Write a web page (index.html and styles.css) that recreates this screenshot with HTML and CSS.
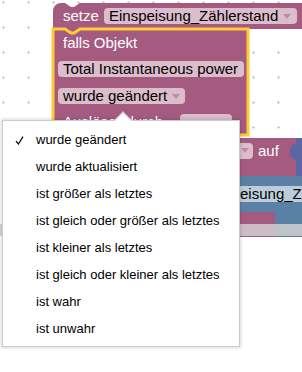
FILE: index.html
```html
<!DOCTYPE html>
<html lang="de">
<head>
  <meta charset="UTF-8">
  <meta name="viewport" content="width=device-width, initial-scale=1.0">
  <title>Blockly - Auslöser</title>
  <link rel="stylesheet" href="styles.css">
</head>
<body>
  <div class="workspace">
    <svg class="canvas" width="302" height="237" viewBox="0 0 302 237">
      <defs>
        <pattern id="grid" width="25" height="25" patternUnits="userSpaceOnUse">
          <path class="grid-mark" d="M2 2.5H5M3.5 1V4"/>
        </pattern>
      </defs>
      <rect width="302" height="237" fill="url(#grid)"/>

      <!-- setze Einspeisung_Zählerstand -->
      <path class="block-var" d="M53 11a8 8 0 0 1 8-8h4l6 4h3l6-4H306V29H80l-6 4h-3l-6-4H53Z"/>
      <text class="label" x="63" y="21">setze</text>
      <rect class="field-var" x="104" y="8" width="193" height="16" rx="4"/>
      <text class="field-text" x="109" y="21">Einspeisung_Zählerstand</text>
      <path class="arrow-var" d="M283 14h8l-4 5z"/>

      <!-- zweiter Block: ... auf -->
      <rect class="block-var" x="40" y="138" width="256" height="38"/>
      <rect class="field-var" x="180" y="143" width="73" height="16" rx="4"/>
      <path class="arrow-var" d="M241 148h8l-4 5z"/>
      <text class="label" x="258" y="156">auf</text>
      <rect class="block-math" x="296" y="138" width="10" height="38"/>
      <path class="block-math" d="M297 143c-4 0-7 3-7 8.5s3 8.5 7 8.5z"/>

      <rect class="block-text" x="40" y="176" width="270" height="36"/>
      <rect class="field-text-bg" x="198" y="186" width="120" height="16" rx="4"/>
      <text class="field-text" x="202.5" y="199">Einspeisung_Zählerstand</text>

      <rect class="block-var" x="40" y="212" width="235" height="25"/>
      <rect class="block-text" x="275" y="212" width="35" height="25"/>
      <rect class="scrollbar" x="0" y="224" width="302" height="12"/>

      <!-- falls Objekt (ausgewählt) -->
      <path class="block-var selected" d="M53 29H65l6 4h3l6-4H248V135H53Z"/>
      <text class="label" x="63" y="48">falls Objekt</text>
      <rect class="field-var" x="58" y="61" width="186" height="16" rx="4"/>
      <text class="field-text" x="63" y="74">Total Instantaneous power</text>
      <rect class="field-var" x="58" y="88" width="127" height="16" rx="4"/>
      <text class="field-text" x="63" y="101">wurde geändert</text>
      <path class="arrow-var" d="M172 94h8l-4 5z"/>
      <text class="label" x="63" y="127">Auslöser durch</text>
      <rect class="field-var" x="180" y="114" width="52" height="16" rx="4"/>
    </svg>

    <div class="menu">
      <span class="menu-arrow"></span>
      <div class="menu-item">
        <svg class="check" width="9" height="9" viewBox="0 0 9 9"><path d="M1 5.2L3.4 8 8 .6"/></svg>
        wurde geändert
      </div>
      <div class="menu-item">wurde aktualisiert</div>
      <div class="menu-item">ist größer als letztes</div>
      <div class="menu-item">ist gleich oder größer als letztes</div>
      <div class="menu-item">ist kleiner als letztes</div>
      <div class="menu-item">ist gleich oder kleiner als letztes</div>
      <div class="menu-item">ist wahr</div>
      <div class="menu-item">ist unwahr</div>
    </div>
  </div>
</body>
</html>
```

FILE: styles.css
```css
body {
  margin: 0;
  background: #fff;
  font-family: "Liberation Sans", Arial, sans-serif;
}
.workspace {
  position: relative;
  width: 302px;
  height: 372px;
  overflow: hidden;
}
.canvas {
  display: block;
}
.grid-mark {
  stroke: #ccc;
  stroke-width: 1;
  fill: none;
}
.block-var {
  fill: #a55b80;
}
.block-text {
  fill: #5b80a5;
}
.block-math {
  fill: #5b67a5;
}
.selected {
  stroke: #fc3;
  stroke-width: 3;
}
.field-var {
  fill: #dbbdcc;
}
.field-text-bg {
  fill: #bdccdb;
}
.arrow-var {
  fill: #c28aa7;
}
.scrollbar {
  fill: #d0d0d0;
  opacity: 0.85;
}
.label, .field-text {
  font-family: "Liberation Sans", Arial, sans-serif;
  font-size: 15px;
}
.label {
  fill: #fff;
}
.field-text {
  fill: #000;
}
.menu {
  position: absolute;
  left: 2px;
  top: 120px;
  width: 238px;
  box-sizing: border-box;
  background: #fff;
  border: 1px solid #ccc;
  box-shadow: 0 0 3px 1px rgba(0, 0, 0, 0.15);
  padding: 5px 0 4px;
}
.menu-arrow {
  position: absolute;
  left: 114px;
  top: -7px;
  width: 12px;
  height: 12px;
  box-sizing: border-box;
  background: #fff;
  border-top: 1px solid #ccc;
  border-left: 1px solid #ccc;
  transform: rotate(45deg);
}
.menu-item {
  position: relative;
  height: 27px;
  line-height: 27px;
  padding-left: 33px;
  font-size: 13px;
  color: #000;
  white-space: nowrap;
}
.check {
  position: absolute;
  left: 12px;
  top: 10px;
}
.check path {
  fill: none;
  stroke: #000;
  stroke-width: 1.2;
}
```
